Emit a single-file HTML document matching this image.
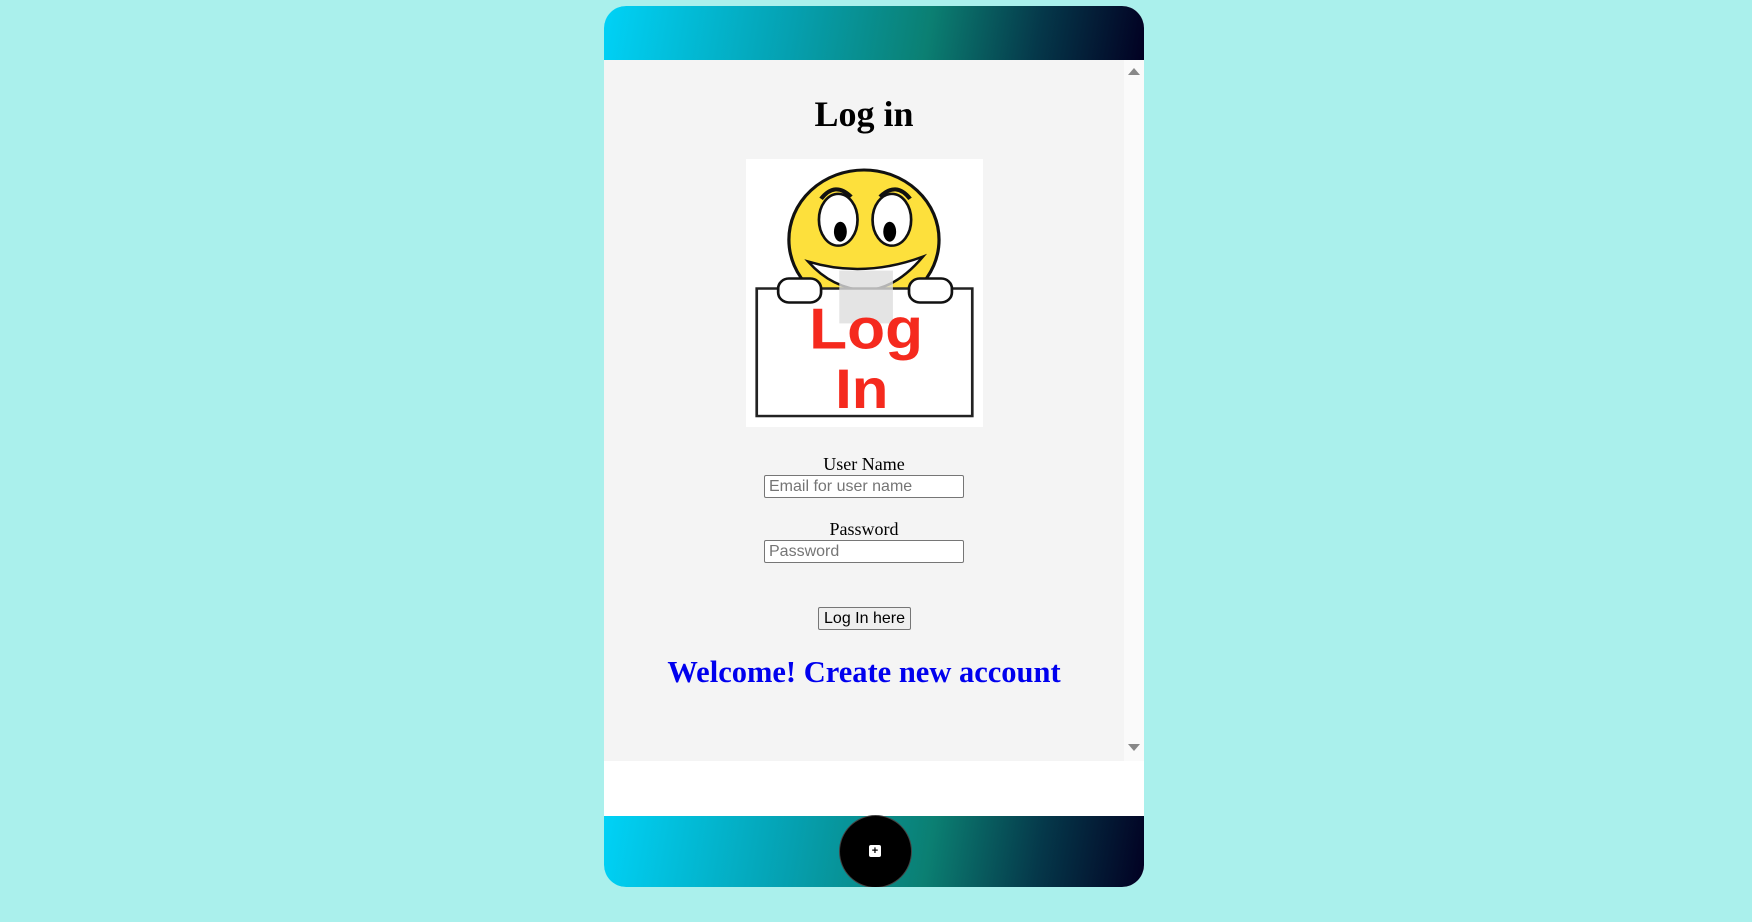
<!DOCTYPE html>
<html><head><style>
html,body{margin:0;padding:0;width:1752px;height:922px;background:#aaf0ec;overflow:hidden;font-family:"Liberation Serif",serif}
.phone{position:absolute;left:604px;top:6px;width:540px;height:881px;border-radius:22px;overflow:hidden;background:#fff}
.hdr{position:absolute;left:0;top:0;width:540px;height:54px;background:linear-gradient(100deg,#00d2f7 0%,#05a0b0 35%,#0b7f72 60%,#05384a 80%,#020022 100%)}
.ftr{position:absolute;left:0;top:810px;width:540px;height:71px;background:linear-gradient(100deg,#00d2f7 0%,#05a0b0 35%,#0b7f72 60%,#05384a 80%,#020022 100%)}
.content{position:absolute;left:0;top:54px;width:520px;height:701px;background:#f4f4f4}
.sb{position:absolute;left:520px;top:54px;width:20px;height:701px;background:#fafafa}
.abs{position:absolute}
h1{position:absolute;margin:0;left:0;width:520px;text-align:center;top:34px;font-size:36px;font-weight:bold;line-height:40px}
.lbl{position:absolute;left:0;width:520px;text-align:center;font-size:18px;line-height:20px}
.inp{position:absolute;left:160px;border:1px solid #767676;border-radius:2px;background:#fff;font-family:"Liberation Sans",sans-serif;font-size:16px;color:#757575;line-height:21px;padding-left:4px;box-sizing:border-box;width:200px;height:23px}
.btn{position:absolute;left:214px;top:547px;width:93px;height:23px;box-sizing:border-box;border:1px solid #767676;border-radius:2px;background:#efefef;font-family:"Liberation Sans",sans-serif;font-size:16px;text-align:center;line-height:21px}
.wel{position:absolute;left:0;width:520px;text-align:center;top:595px;font-size:30.5px;font-weight:bold;color:#0000ee;line-height:34px}
</style></head><body>
<div class="phone">
<div class="hdr"></div>
<div class="content">
<h1>Log in</h1>
<div class="abs" style="left:142px;top:99px;width:237px;height:268px;background:#fff">
<svg width="237" height="268" viewBox="0 0 221 269" preserveAspectRatio="none">
<circle cx="110" cy="81" r="70" fill="#fde03c" stroke="#111" stroke-width="3"/>
<path d="M70 40 Q83 22 98 38" fill="none" stroke="#111" stroke-width="4"/>
<path d="M125 38 Q140 22 153 40" fill="none" stroke="#111" stroke-width="4"/>
<ellipse cx="86" cy="61" rx="18" ry="26" fill="#fff" stroke="#111" stroke-width="2.5"/>
<ellipse cx="136" cy="61" rx="18" ry="26" fill="#fff" stroke="#111" stroke-width="2.5"/>
<ellipse cx="88" cy="73" rx="6" ry="10" fill="#000"/>
<ellipse cx="134" cy="73" rx="6" ry="10" fill="#000"/>
<path d="M58 103 Q110 120 165 98 Q140 130 112 132 Q80 130 58 103Z" fill="#fff" stroke="#111" stroke-width="2.5"/>
<rect x="10" y="130" width="201" height="128" fill="#fff" stroke="#222" stroke-width="2.5"/>
<rect x="30" y="120" width="40" height="24" rx="10" fill="#fff" stroke="#111" stroke-width="2.5"/>
<rect x="152" y="120" width="40" height="24" rx="10" fill="#fff" stroke="#111" stroke-width="2.5"/>
<rect x="87" y="112" width="50" height="53" fill="#ddd" opacity=".8"/>
<text x="112" y="190" text-anchor="middle" font-family="Liberation Sans,sans-serif" font-weight="bold" font-size="58" fill="#f52a1e">Log</text>
<text x="108" y="250" text-anchor="middle" font-family="Liberation Sans,sans-serif" font-weight="bold" font-size="56" fill="#f52a1e">In</text>
</svg></div>
<div class="lbl" style="top:394px">User Name</div>
<div class="inp" style="top:415px">Email for user name</div>
<div class="lbl" style="top:459px">Password</div>
<div class="inp" style="top:480px">Password</div>
<div class="btn">Log In here</div>
<div class="wel">Welcome! Create new account</div>
</div>
<div class="sb">
<div class="abs" style="left:4px;top:8px;width:0;height:0;border-left:6px solid transparent;border-right:6px solid transparent;border-bottom:7px solid #888"></div>
<div class="abs" style="left:4px;top:684px;width:0;height:0;border-left:6px solid transparent;border-right:6px solid transparent;border-top:7px solid #888"></div>
</div>
<div class="ftr"></div>
<div class="abs" style="left:236px;top:810px;width:71px;height:71px;border-radius:50%;background:#000;box-shadow:0 0 0 1px #444"></div>
<div class="abs" style="left:265px;top:839px;width:12px;height:12px;background:#fff;border-radius:2px;font:bold 11px 'Liberation Sans',sans-serif;line-height:12px;text-align:center;color:#000">+</div>
</div>
</body></html>
